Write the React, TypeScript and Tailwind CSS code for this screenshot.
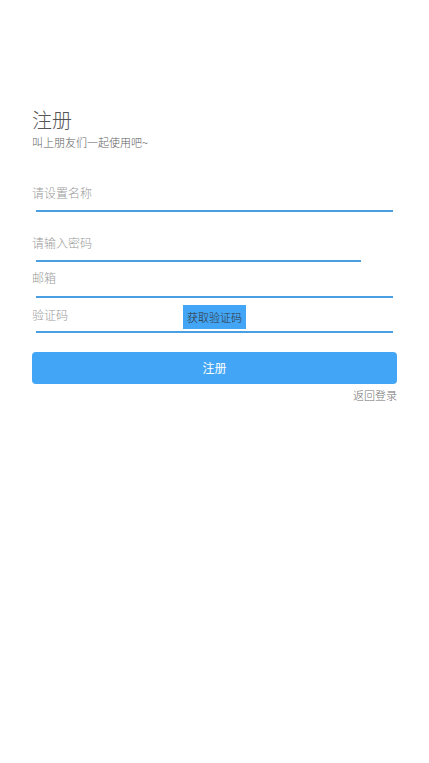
import { useState } from 'react';

const font = { fontFamily: '"Noto Sans CJK SC", "Noto Sans", sans-serif' };

export default function App() {
  const [name, setName] = useState('');
  const [pwd, setPwd] = useState('');
  const [email, setEmail] = useState('');
  const [code, setCode] = useState('');

  const inputCls =
    'block w-full h-[20px] bg-transparent text-[12px] font-light leading-[20px] text-[#333] outline-none placeholder:text-[#9a9a9a]';

  return (
    <div className="min-h-[763px] w-full bg-white px-8 pt-[108px] font-light" style={font}>
      <h1 className="text-[20px] leading-[24px] font-light text-[#555]">注册</h1>
      <p className="mt-[2px] text-[11px] leading-[16px] text-[#5e5e5e]">叫上朋友们一起使用吧~</p>

      <input
        className={`${inputCls} mt-[33px]`}
        placeholder="请设置名称"
        value={name}
        onChange={(e) => setName(e.target.value)}
      />
      <div className="mx-1 mt-[7px] h-[2px] bg-[#4a9fe2]" />

      <input
        type="password"
        className={`${inputCls} mt-[21px]`}
        placeholder="请输入密码"
        value={pwd}
        onChange={(e) => setPwd(e.target.value)}
      />
      <div className="ml-1 mr-9 mt-[7px] h-[2px] bg-[#4a9fe2]" />

      <input
        className={`${inputCls} mt-[6px]`}
        placeholder="邮箱"
        value={email}
        onChange={(e) => setEmail(e.target.value)}
      />
      <div className="mx-1 mt-[8px] h-[2px] bg-[#4a9fe2]" />

      <div className="mt-[7px] flex h-[24px] items-start">
        <input
          className="block w-[151px] h-[20px] bg-transparent text-[12px] font-light leading-[20px] text-[#333] outline-none placeholder:text-[#9a9a9a]"
          placeholder="验证码"
          value={code}
          onChange={(e) => setCode(e.target.value)}
        />
        <button
          type="button"
          className="h-[24px] w-[63px] bg-[#42a5f5] text-center text-[11px] font-light leading-[24px] text-[#333]"
        >
          获取验证码
        </button>
      </div>
      <div className="mx-1 mt-[2px] h-[2px] bg-[#4a9fe2]" />

      <button
        type="button"
        className="mt-[19px] h-[32px] w-full rounded-[4px] bg-[#42a5f5] text-[12px] font-normal text-white"
      >
        注册
      </button>
      <div className="mt-[3px] text-right text-[11px] leading-[16px] text-[#6e6e6e]">返回登录</div>
    </div>
  );
}
